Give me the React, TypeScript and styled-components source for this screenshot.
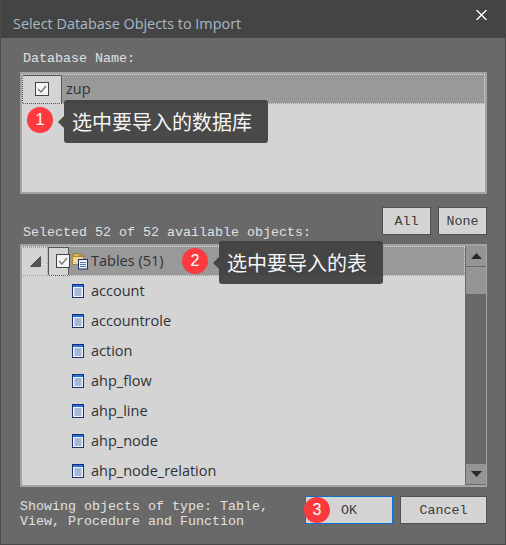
import React, { FC } from "react";
import styled, { createGlobalStyle } from "styled-components";

const GlobalStyle = createGlobalStyle`
  html, body { margin: 0; padding: 0; background: #696969; }
  * { box-sizing: border-box; }
`;

const mono = `"Liberation Mono", "DejaVu Sans Mono", monospace`;
const sans = `"Open Sans", "Noto Sans", "Noto Sans CJK SC", sans-serif`;

const Dialog = styled.div`
  position: relative;
  width: 506px;
  height: 545px;
  display: flex;
  flex-direction: column;
  background: #696969;
  border: 1px solid #4a4a4a;
  border-top: 0;
  overflow: hidden;
`;

const TitleBar = styled.div`
  height: 38px;
  flex: none;
  margin: 0 -1px;
  padding-left: 13px;
  display: flex;
  justify-content: space-between;
  background: #444444;
`;

const TitleText = styled.span`
  margin-top: 14px;
  color: #a9b9c6;
  font: 14.4px/20px ${sans};
`;

const CloseButton = styled.svg`
  width: 11px;
  height: 10px;
  margin: 10px 19px 0 0;
  stroke: #ffffff;
  stroke-width: 1.4;
`;

const Content = styled.div`
  flex: 1;
  display: flex;
  flex-direction: column;
  padding: 14px 18px 0 19px;
`;

const Label = styled.div`
  color: #e0e0e0;
  font: 13.33px/14px ${mono};
`;

const DbLabel = styled(Label)`
  padding: 0 0 6px 3px;
`;

const ListBox = styled.div`
  height: 122px;
  border: 2px solid #a3a3a3;
  background: #d4d4d4;
`;

const SelectedRow = styled.div`
  height: 30px;
  display: flex;
  align-items: center;
  background: #999999;
  outline: 1px dotted #d8d8d8;
  outline-offset: -1px;
`;

const DbCheckCell = styled.div`
  width: 40px;
  height: 29px;
  display: flex;
  align-items: center;
  justify-content: center;
  background: #d4d4d4;
  border: 1px solid #555555;
`;

const CheckBox = styled.div`
  width: 14px;
  height: 14px;
  flex: none;
  display: flex;
  align-items: center;
  justify-content: center;
  background: #f4f4f4;
  border: 1px solid #444444;
`;

const CheckMark = styled.svg`
  width: 12px;
  height: 12px;
  fill: none;
  stroke: #777777;
  stroke-width: 1.3;
`;

const RowText = styled.span`
  color: #2f3236;
  font: 14.5px/20px ${sans};
  white-space: nowrap;
`;

const DbName = styled(RowText)`
  margin-left: 4px;
`;

const ObjectsHeader = styled.div`
  height: 37px;
  margin-top: 13px;
  display: flex;
  justify-content: space-between;
  align-items: flex-start;
`;

const ObjectsLabel = styled(Label)`
  padding: 19px 0 0 3px;
`;

const HeaderButtons = styled.div`
  display: flex;
  gap: 7px;
`;

const SmallButton = styled.div`
  width: 49px;
  height: 28px;
  display: flex;
  align-items: center;
  justify-content: center;
  background: #d4d4d4;
  border: 1px solid #505050;
  color: #3c3c3c;
  font: 13.33px ${mono};
`;

const TreeBox = styled.div`
  height: 243px;
  display: flex;
  border: 2px solid #a3a3a3;
  border-right-width: 1px;
  background: #d4d4d4;
`;

const TreeList = styled.div`
  flex: 1;
  min-width: 0;
  overflow: hidden;
`;

const TreeRootRow = styled.div`
  height: 30px;
  display: flex;
  align-items: center;
  background: #999999;
  outline: 1px dotted #d8d8d8;
  outline-offset: -1px;
`;

const Expander = styled.div`
  width: 26px;
  height: 29px;
  flex: none;
  display: flex;
  align-items: center;
  justify-content: center;
  background: #d4d4d4;
  outline: 1px dotted #a0a0a0;
  outline-offset: -1px;
`;

const ExpandArrow = styled.svg`
  width: 11px;
  height: 11px;
  fill: #555555;
  stroke: #222222;
  stroke-width: 0.6;
`;

// the checkbox pokes out of its cell, over the selected row
const TreeCheckCell = styled.div`
  width: 21px;
  height: 29px;
  flex: none;
  display: flex;
  align-items: center;
  padding-left: 7px;
  background: #d4d4d4;
  border: 1px solid #555555;
`;

const FolderIcon = styled.svg`
  width: 17px;
  height: 18px;
  flex: none;
  margin: 0 2px 0 3px;
`;

const ObjectRow = styled.div`
  height: 30px;
  display: flex;
  align-items: center;
  padding-left: 50px;
  gap: 7px;
`;

const TableIconSvg = styled.svg`
  width: 12px;
  height: 14px;
  flex: none;
`;

const ScrollBar = styled.div`
  width: 21px;
  flex: none;
  display: flex;
  flex-direction: column;
  background: #696969;
  padding: 0 0 1px 1px;
`;

const ScrollArrow = styled.div`
  height: 20px;
  flex: none;
  display: flex;
  align-items: center;
  justify-content: center;
  background: #959595;
`;

const ArrowGlyph = styled.svg`
  width: 11px;
  height: 6px;
  fill: #2a2a2a;
`;

const ScrollThumb = styled.div`
  height: 27px;
  margin-top: 1px;
  background: #959595;
`;

const ScrollTrack = styled.div`
  flex: 1;
`;

const Footer = styled.div`
  display: flex;
  justify-content: space-between;
  padding-top: 9px;
`;

const FooterNote = styled(Label)`
  padding-top: 3px;
  line-height: 15px;
  white-space: pre-line;
`;

const FooterButtons = styled.div`
  display: flex;
  gap: 7px;
`;

const ActionButton = styled.div<{ $focused?: boolean }>`
  width: ${p => (p.$focused ? 88 : 87)}px;
  height: 28px;
  display: flex;
  align-items: center;
  justify-content: center;
  background: #d4d4d4;
  border: 1px solid ${p => (p.$focused ? "#0f6fd0" : "#505050")};
  color: #3c3c3c;
  font: 13.33px ${mono};
`;

// annotations pasted on top of the dialog
const Callout = styled.div<{ $x: number; $y: number; $w: number }>`
  position: absolute;
  left: ${p => p.$x}px;
  top: ${p => p.$y}px;
  width: ${p => p.$w}px;
  height: 43px;
  display: flex;
  align-items: center;
  padding-left: 8px;
  border-radius: 3px;
  background: rgba(62, 62, 62, 0.93);
  color: #f5f5f5;
  font: 20px "Noto Sans CJK SC", sans-serif;
  &::before {
    content: "";
    position: absolute;
    left: -6px;
    top: 16px;
    border: 6px solid transparent;
    border-left: 0;
    border-right-color: rgba(62, 62, 62, 0.93);
  }
`;

const Badge = styled.div<{ $x: number; $y: number }>`
  position: absolute;
  left: ${p => p.$x}px;
  top: ${p => p.$y}px;
  width: 26px;
  height: 26px;
  display: flex;
  align-items: center;
  justify-content: center;
  border-radius: 50%;
  background: #fc3a3e;
  color: #ffffff;
  font: 16px "Liberation Sans", sans-serif;
`;

const TableIcon: FC = () => (
  <TableIconSvg viewBox="0 0 12 14">
    <rect x="0.5" y="0.5" width="11" height="13" fill="#eef3fa" stroke="#1c2f6e" />
    <rect x="1" y="1" width="10" height="2" fill="#1f6fdc" />
    <path d="M2.5 5h7M2.5 7h7M2.5 9h7M2.5 11h7" stroke="#5a7fb8" />
  </TableIconSvg>
);

const Check: FC = () => (
  <CheckBox>
    <CheckMark viewBox="0 0 12 12">
      <path d="M2 6l3 3 5-6" />
    </CheckMark>
  </CheckBox>
);

const objects = ["account", "accountrole", "action", "ahp_flow", "ahp_line", "ahp_node", "ahp_node_relation"];

const App: FC = () => (
  <>
    <GlobalStyle />
    <Dialog>
      <TitleBar>
        <TitleText>Select Database Objects to Import</TitleText>
        <CloseButton viewBox="0 0 11 10">
          <path d="M0.5 0l10 10M10.5 0l-10 10" />
        </CloseButton>
      </TitleBar>
      <Content>
        <DbLabel>Database Name:</DbLabel>
        <ListBox>
          <SelectedRow>
            <DbCheckCell>
              <Check />
            </DbCheckCell>
            <DbName>zup</DbName>
          </SelectedRow>
        </ListBox>
        <ObjectsHeader>
          <ObjectsLabel>Selected 52 of 52 available objects:</ObjectsLabel>
          <HeaderButtons>
            <SmallButton>All</SmallButton>
            <SmallButton>None</SmallButton>
          </HeaderButtons>
        </ObjectsHeader>
        <TreeBox>
          <TreeList>
            <TreeRootRow>
              <Expander>
                <ExpandArrow viewBox="0 0 11 11">
                  <path d="M10.5 0.5v10h-10z" />
                </ExpandArrow>
              </Expander>
              <TreeCheckCell>
                <Check />
              </TreeCheckCell>
              <FolderIcon viewBox="0 0 17 18">
                <path d="M1 4V1.500h5l1.500 1.500H11v2H1z" fill="#d9b25a" stroke="#9a7a30" />
                <rect x="0.500" y="4.500" width="11" height="8" fill="#f0d88a" stroke="#a8853a" />
                <rect x="6.500" y="7.500" width="9" height="9.500" fill="#eef3fa" stroke="#1c2f6e" />
                <path d="M8 10.500h6M8 12.500h6M8 14.500h6" stroke="#4f74ad" />
              </FolderIcon>
              <RowText>Tables (51)</RowText>
            </TreeRootRow>
            {objects.map(name => (
              <ObjectRow key={name}>
                <TableIcon />
                <RowText>{name}</RowText>
              </ObjectRow>
            ))}
          </TreeList>
          <ScrollBar>
            <ScrollArrow>
              <ArrowGlyph viewBox="0 0 11 6">
                <path d="M5.500 0L11 6H0z" />
              </ArrowGlyph>
            </ScrollArrow>
            <ScrollThumb />
            <ScrollTrack />
            <ScrollArrow>
              <ArrowGlyph viewBox="0 0 11 6">
                <path d="M0 0h11L5.500 6z" />
              </ArrowGlyph>
            </ScrollArrow>
          </ScrollBar>
        </TreeBox>
        <Footer>
          <FooterNote>{"Showing objects of type: Table,\nView, Procedure and Function"}</FooterNote>
          <FooterButtons>
            <ActionButton $focused>OK</ActionButton>
            <ActionButton>Cancel</ActionButton>
          </FooterButtons>
        </Footer>
      </Content>
      <Callout $x={63} $y={100} $w={204}>选中要导入的数据库</Callout>
      <Callout $x={218} $y={241} $w={164}>选中要导入的表</Callout>
      <Badge $x={26} $y={107}>1</Badge>
      <Badge $x={181} $y={248}>2</Badge>
      <Badge $x={303} $y={497}>3</Badge>
    </Dialog>
  </>
);

export default App;
